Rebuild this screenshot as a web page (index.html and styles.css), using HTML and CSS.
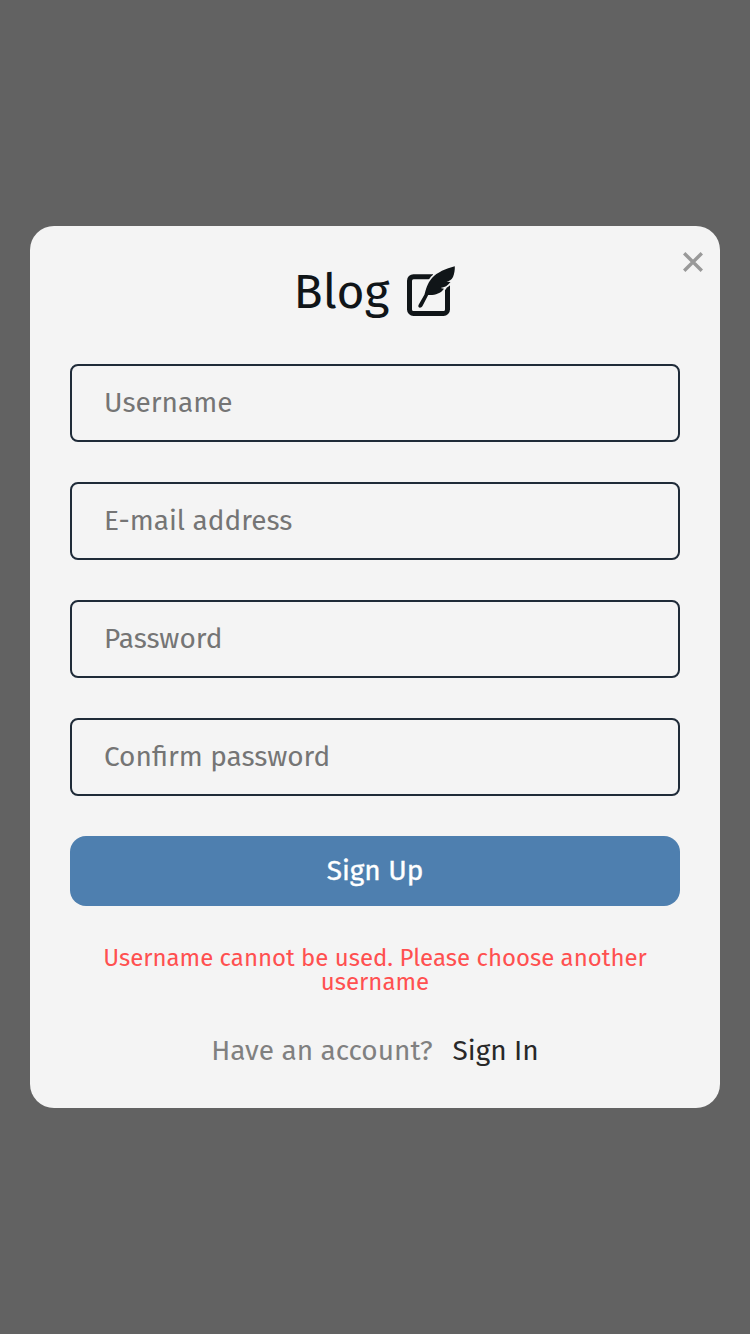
FILE: index.html
```html
<!DOCTYPE html>
<html lang="en">
<head>
<meta charset="utf-8">
<title>Blog – Sign Up</title>
<link rel="stylesheet" href="styles.css">
</head>
<body>
<main class="modal">
  <button class="close" type="button" aria-label="Close">
    <svg viewBox="0 0 20 20" width="20" height="20"><path d="M1.2 1.2 18.8 18.8M18.8 1.2 1.2 18.8"/></svg>
  </button>
  <h1 class="brand">
    <span class="brand-name">Blog</span>
    <svg class="brand-icon" viewBox="0 0 50 52" width="50" height="52">
      <path class="frame" d="M28 12.700H8.500A4 4 0 0 0 4.500 16.700V45.500A4 4 0 0 0 8.500 49.500H38.500A4 4 0 0 0 42.500 45.500V21"/>
      <path class="quill-gap" d="M49.800 2.300C41 4.500 32 8.500 27 14C22 20 21 25 19.500 30.500L13.500 41C12.500 44 16 44.800 17.500 42L23.200 31C29 31.500 35.500 30 39 24.800L35.500 24C39.500 23.500 43 21.500 45.500 18L41.500 17.800C44 17.300 46.500 16 48 13C49.300 10 50 6 49.800 2.300Z"/>
      <path class="quill" d="M49.800 2.300C41 4.500 32 8.500 27 14C22 20 21 25 19.500 30.500L13.500 41C12.500 44 16 44.800 17.500 42L23.200 31C29 31.500 35.500 30 39 24.800L35.500 24C39.500 23.500 43 21.500 45.500 18L41.500 17.800C44 17.300 46.500 16 48 13C49.300 10 50 6 49.800 2.300Z"/>
    </svg>
  </h1>
  <form class="form">
    <input class="field" type="text" placeholder="Username">
    <input class="field" type="text" placeholder="E-mail address">
    <input class="field" type="password" placeholder="Password">
    <input class="field" type="password" placeholder="Confirm password">
    <button class="submit" type="button">Sign Up</button>
  </form>
  <p class="error">Username cannot be used. Please choose another username</p>
  <p class="switch"><span class="question">Have an account?</span><a class="signin">Sign In</a></p>
</main>
</body>
</html>
```
FILE: styles.css
```css
* { box-sizing: border-box; }
body {
  margin: 0;
  min-height: 1334px;
  display: flex;
  align-items: center;
  justify-content: center;
  background: #626262;
  font-family: "Fira Sans", "Open Sans", sans-serif;
}
.modal {
  position: relative;
  width: 690px;
  height: 882px;
  padding: 38px 40px 0;
  border-radius: 24px;
  background: #f4f4f4;
}
.close {
  position: absolute;
  top: 26px;
  right: 17px;
  width: 20px;
  height: 20px;
  padding: 0;
  border: 0;
  background: none;
}
.close svg { display: block; fill: none; stroke: #999; stroke-width: 3.4; }
.brand {
  display: flex;
  justify-content: center;
  gap: 15px;
  height: 100px;
  margin: 0;
  padding-right: 2px;
  font-weight: 400;
  font-size: 48px;
  line-height: 56px;
  color: #101518;
}
.brand-icon { overflow: visible; }
.frame { fill: none; stroke: #101518; stroke-width: 5; }
.quill-gap { fill: #f4f4f4; stroke: #f4f4f4; stroke-width: 3.4; }
.quill { fill: #101518; }
.form { display: flex; flex-direction: column; gap: 40px; }
.field {
  height: 78px;
  padding: 0 32px 2px;
  border: 2px solid #1f2b38;
  border-radius: 8px;
  background: transparent;
  font: 400 28px "Fira Sans", "Open Sans", sans-serif;
}
.field::placeholder { color: #757575; opacity: 1; }
.submit {
  height: 70px;
  padding: 0 0 2px;
  border: 0;
  border-radius: 16px;
  background: #4e7faf;
  color: #fff;
  font: 400 28px "Fira Sans", "Open Sans", sans-serif;
  -webkit-text-stroke: 0.35px #fff;
}
.error {
  margin: 40px 0 0;
  padding: 0 20px;
  text-align: center;
  font-size: 24px;
  line-height: 24px;
  color: #ff5050;
}
.switch {
  display: flex;
  justify-content: center;
  gap: 20px;
  margin: 39px 0 0;
  font-size: 28px;
  line-height: 36px;
  color: #808080;
}
.signin { color: #282828; }
```
